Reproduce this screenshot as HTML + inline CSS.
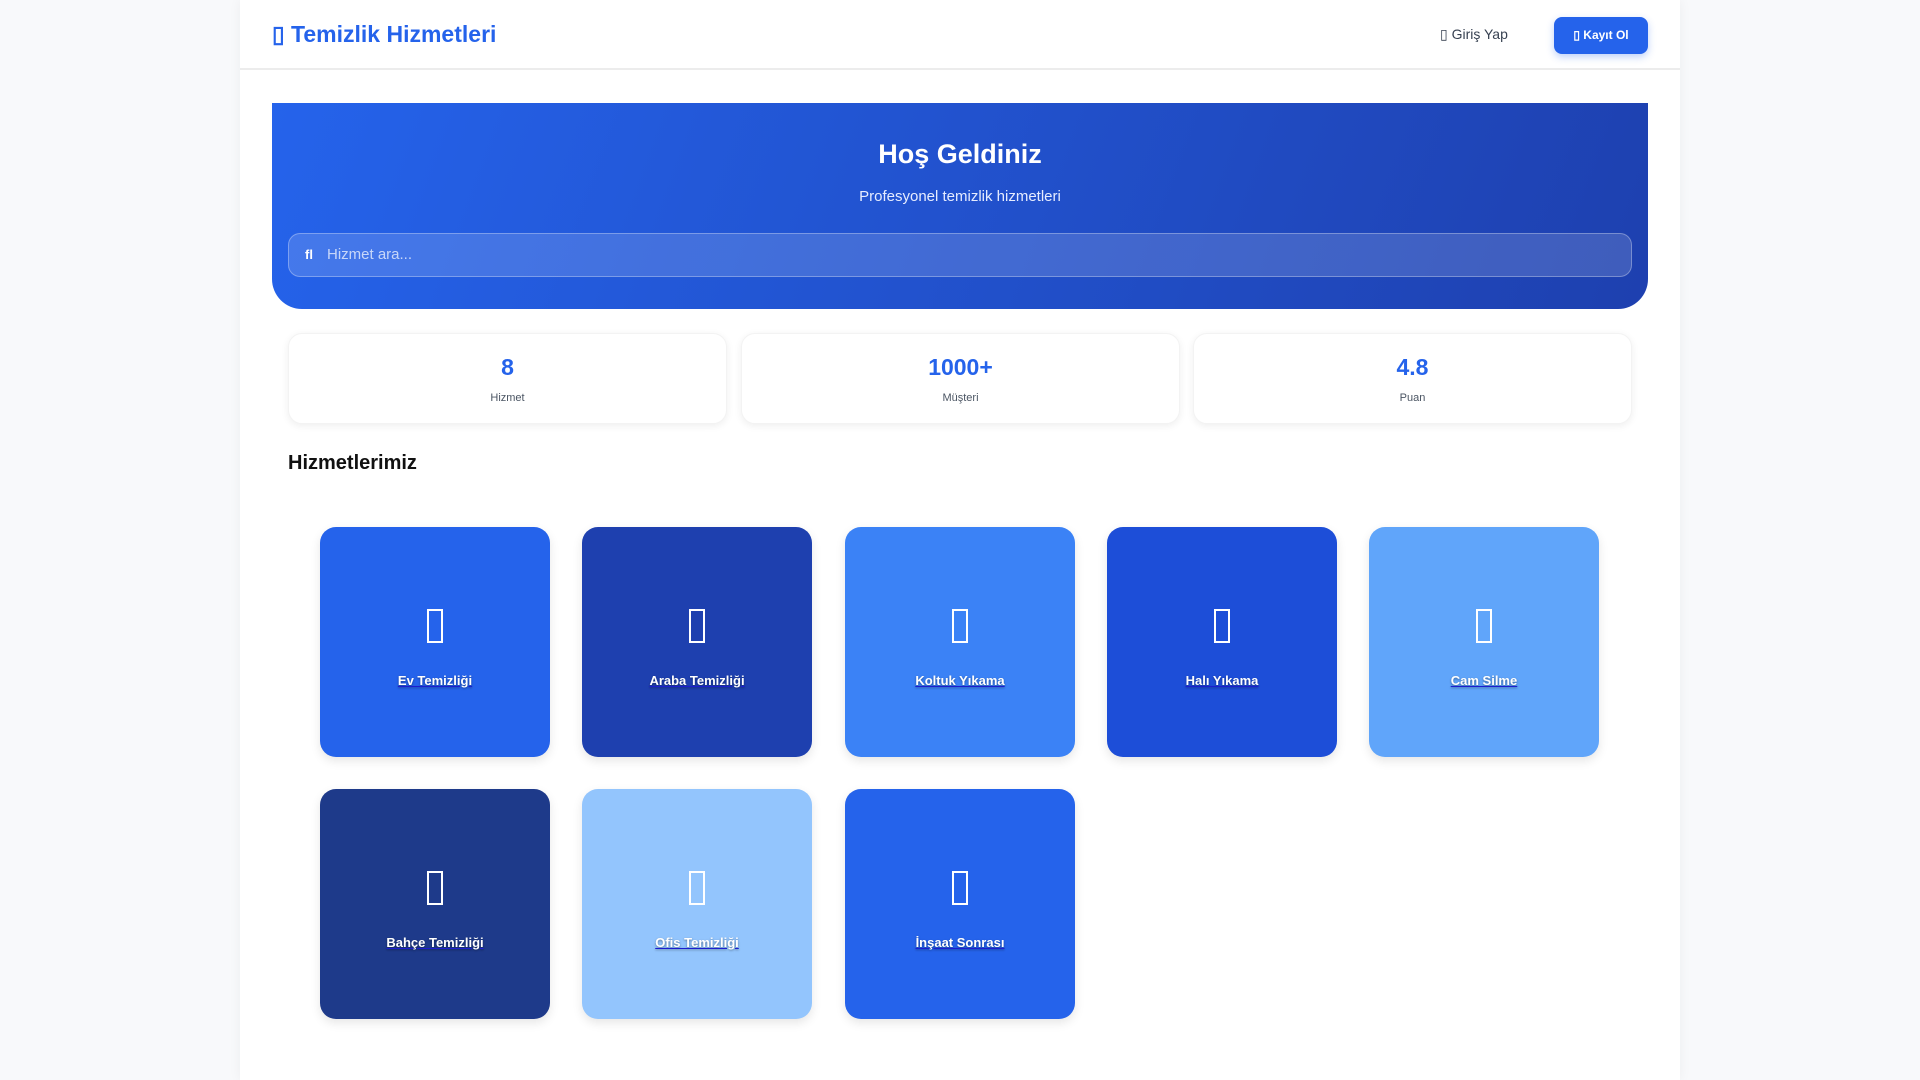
<!DOCTYPE html>
<html><head><meta charset="utf-8"><style>
*{box-sizing:border-box;margin:0;padding:0}
body{width:1920px;height:1080px;background:#f8f9fb;font-family:"Liberation Sans",sans-serif;overflow:hidden;position:relative}
.wrap{position:absolute;left:240px;top:0;width:1440px;height:1080px;background:#fff;box-shadow:0 0 12px rgba(0,0,0,.05)}
.hdr{position:absolute;left:0;top:0;width:1440px;height:70px;border-bottom:2px solid #ececec}
.logo{position:absolute;left:32px;top:21px;font-size:23px;font-weight:bold;color:#2563eb}
.giris{position:absolute;left:1200px;top:26px;font-size:14px;color:#374151}
.kayit{position:absolute;left:1314px;top:17px;width:94px;height:37px;background:#2563eb;color:#fff;border-radius:8px;font-size:12px;font-weight:bold;text-align:center;line-height:37px;box-shadow:0 3px 8px rgba(37,99,235,.3)}
.hero{position:absolute;left:32px;top:103px;width:1376px;height:206px;background:linear-gradient(110deg,#2563eb,#1e40af);border-radius:0 0 30px 30px;text-align:center;color:#fff}
.hero h1{position:absolute;left:0;top:36px;width:100%;font-size:27px}
.hero p{position:absolute;left:0;top:85px;width:100%;font-size:15px;color:#e6ecff}
.search{position:absolute;left:16px;top:130px;width:1344px;height:44px;border-radius:12px;background:rgba(255,255,255,.15);border:1px solid rgba(255,255,255,.3);text-align:left;padding-left:38px;line-height:42px;font-size:15px;color:rgba(255,255,255,.7)}
.search span{position:absolute;left:16px;font-size:13px;color:#fff;font-weight:bold}
.stat{position:absolute;top:333px;width:439px;height:91px;border-radius:14px;background:#fff;box-shadow:0 2px 8px rgba(0,0,0,.07);border:1px solid #f3f3f3;text-align:center}
.stat b{position:absolute;left:0;top:20px;width:100%;font-size:23px;color:#2563eb}
.stat i{position:absolute;left:0;top:58px;width:100%;font-size:11px;font-style:normal;color:#4b5563}
.sec{position:absolute;left:48px;top:452px;font-size:20px;font-weight:bold;color:#111}
.t{position:absolute;width:230px;height:230px;border-radius:16px;color:#fff;text-align:center;box-shadow:0 4px 10px rgba(0,0,0,.1)}
.t .ic{position:absolute;top:82px;left:107px;width:16px;height:34px;border:2px solid #fff}
.t u{position:absolute;top:146px;left:0;width:100%;font-size:13px;font-weight:bold;text-decoration:underline;text-decoration-color:#1d1dcf;text-shadow:0 1px 2px rgba(0,0,0,.4)}
</style></head><body>
<div class="wrap">
<div class="hdr"><div class="logo">▯ Temizlik Hizmetleri</div><div class="giris">▯ Giriş Yap</div><div class="kayit">▯ Kayıt Ol</div></div>
<div class="hero"><h1>Hoş Geldiniz</h1><p>Profesyonel temizlik hizmetleri</p><div class="search"><span>fl</span>Hizmet ara...</div></div>
<div class="stat" style="left:48px"><b>8</b><i>Hizmet</i></div>
<div class="stat" style="left:501px"><b>1000+</b><i>Müşteri</i></div>
<div class="stat" style="left:953px"><b>4.8</b><i>Puan</i></div>
<div class="sec">Hizmetlerimiz</div>
<div class="t" style="left:80px;top:527px;background:#2563eb"><div class="ic"></div><u>Ev Temizliği</u></div>
<div class="t" style="left:342px;top:527px;background:#1e40af"><div class="ic"></div><u>Araba Temizliği</u></div>
<div class="t" style="left:605px;top:527px;background:#3b82f6"><div class="ic"></div><u>Koltuk Yıkama</u></div>
<div class="t" style="left:867px;top:527px;background:#1d4ed8"><div class="ic"></div><u>Halı Yıkama</u></div>
<div class="t" style="left:1129px;top:527px;background:#60a5fa"><div class="ic"></div><u>Cam Silme</u></div>
<div class="t" style="left:80px;top:789px;background:#1e3a8a"><div class="ic"></div><u>Bahçe Temizliği</u></div>
<div class="t" style="left:342px;top:789px;background:#93c5fd"><div class="ic"></div><u>Ofis Temizliği</u></div>
<div class="t" style="left:605px;top:789px;background:#2563eb"><div class="ic"></div><u>İnşaat Sonrası</u></div>
</div>
</body></html>
